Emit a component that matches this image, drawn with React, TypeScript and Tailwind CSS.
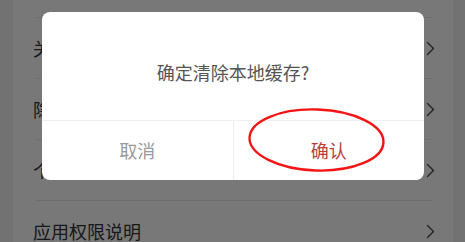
import React from "react";

// only the left edge of the first three labels peeks out from under the dialog
const rows = ["关于", "隐私", "个人", "应用权限说明"];

function Chevron() {
  return (
    <svg width="9" height="15" viewBox="0 0 9 15" fill="none">
      <path d="M1.5 1.5 L7.5 7.5 L1.5 13.5" stroke="#4a4a4a" strokeWidth="1.4" strokeLinecap="round" strokeLinejoin="round" />
    </svg>
  );
}

export default function App() {
  return (
    <div
      className="relative w-[465px] h-[242px] overflow-hidden bg-[#f3f3f3]"
      style={{ fontFamily: '"Noto Sans CJK SC", "Noto Sans", sans-serif' }}
    >
      {/* underlying settings list */}
      <div className="ml-[13px] w-[440px] h-full bg-white">
        <div className="h-[17px]" />
        {rows.map((r) => (
          <div key={r}>
            <div className="ml-[23px] mr-[20px] h-px bg-[#ececec]" />
            <div className="h-[60px] flex items-center justify-between pl-[20px] pr-[18px]">
              <span className="text-[18px] text-[#333]">{r}</span>
              <Chevron />
            </div>
          </div>
        ))}
      </div>

      {/* overlay */}
      <div className="absolute inset-0 bg-black/[0.53]" />

      {/* dialog */}
      <div className="absolute left-[42px] top-[12px] w-[382px] h-[168px] rounded-[8px] bg-white flex flex-col overflow-hidden">
        <div className="h-[108px] flex items-center justify-center pt-[12px]">
          <span className="text-[18px] text-[#555]">确定清除本地缓存?</span>
        </div>
        <div className="h-px bg-[#eeeeee]" />
        <div className="flex-1 flex">
          <div className="flex-1 flex items-center justify-center text-[18px] text-[#9a9a9a]">取消</div>
          <div className="w-px bg-[#eeeeee]" />
          <div className="flex-1 flex items-center justify-center text-[18px] text-[#b93f3b]">确认</div>
        </div>
      </div>

      {/* red annotation ellipse */}
      <svg className="absolute left-0 top-0" width="465" height="242" viewBox="0 0 465 242" fill="none">
        <ellipse cx="316.5" cy="140" rx="67" ry="30.5" stroke="#f41414" strokeWidth="2.4" transform="rotate(2 316.5 140)" />
      </svg>
    </div>
  );
}
